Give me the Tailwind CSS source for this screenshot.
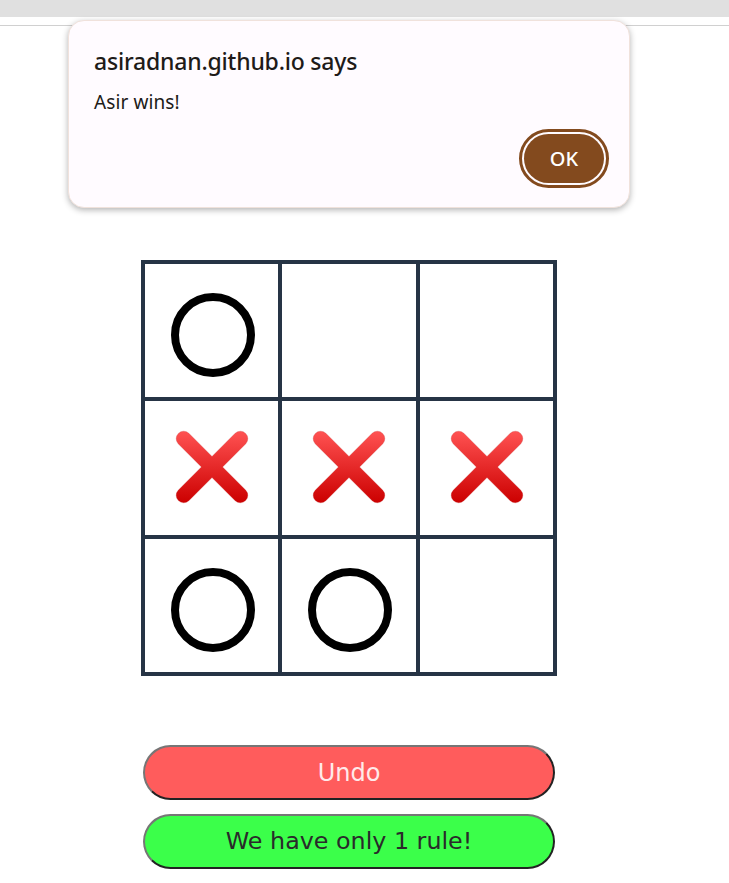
<!DOCTYPE html>
<html lang="en">
<head>
  <meta charset="UTF-8" />
  <title>Tic Tac Toe</title>
  <script src="https://cdn.jsdelivr.net/npm/@tailwindcss/browser@4"></script>
</head>
<body class="relative bg-white h-[883px] overflow-hidden font-['DejaVu_Sans',sans-serif]">
  <!-- Browser strip -->
  <div class="h-[17px] bg-[#e0e0e0]"></div>
  <div class="h-[9px] border-b border-[#d0d0d0]"></div>

  <!-- Alert -->
  <div class="absolute left-[68px] top-[20px] w-[562px] h-[188px] rounded-[16px] border border-[#f0e2dc] bg-[#fffbff] shadow-[0_2px_6px_rgba(0,0,0,0.3)] font-['Noto_Sans',sans-serif] text-[#201a18]">
    <h2 class="absolute left-[25px] top-[25px] text-[23px] leading-[30px] font-medium tracking-[-0.2px]">asiradnan.github.io says</h2>
    <p class="absolute left-[25px] top-[68px] text-[19px] leading-[26px] tracking-[0.1px]">Asir wins!</p>
    <div class="absolute left-[450px] top-[108px] w-[90px] h-[59px] rounded-full border-[3px] border-[#834a1e] p-[2px]">
      <button class="w-full h-full rounded-full bg-[#834a1e] text-white text-[20px] font-medium">OK</button>
    </div>
  </div>

  <main class="w-[698px] pt-[234px] flex flex-col items-center">
    <!-- Board -->
    <div class="grid grid-cols-3 grid-rows-3 w-[416px] h-[416px] p-[4px] gap-[4px] bg-[#263445]">
      <div class="min-h-0 bg-white flex items-center justify-center pl-[3px] pt-[9px]">
        <svg width="84" height="84" viewBox="0 0 84 84"><circle cx="42" cy="42" r="38" fill="none" stroke="#000" stroke-width="8"/></svg>
      </div>
      <div class="min-h-0 bg-white"></div>
      <div class="min-h-0 bg-white"></div>
      <div class="min-h-0 bg-white flex items-center justify-center pb-[1px] pl-[1px]">
        <svg width="74" height="74" viewBox="0 0 74 74">
          <defs>
            <linearGradient id="xfill" x1="0" y1="0" x2="0" y2="1">
              <stop offset="0" stop-color="#ff5252"/>
              <stop offset="1" stop-color="#cc0000"/>
            </linearGradient>
            <path id="cross" fill="url(#xfill)" stroke="#b22" stroke-opacity="0.3" stroke-width="0.8" d="M37 26.4 60.2 3.2A7.500 7.500 0 0 1 70.8 13.800L47.600 37 70.8 60.2A7.500 7.500 0 0 1 60.2 70.8L37 47.600 13.800 70.8A7.500 7.500 0 0 1 3.2 60.2L26.4 37 3.2 13.800A7.500 7.500 0 0 1 13.800 3.2Z"/>
          </defs>
          <use href="#cross"/>
        </svg>
      </div>
      <div class="min-h-0 bg-white flex items-center justify-center pb-[1px] pl-[1px]">
        <svg width="74" height="74" viewBox="0 0 74 74"><use href="#cross"/></svg>
      </div>
      <div class="min-h-0 bg-white flex items-center justify-center pb-[1px] pl-[1px]">
        <svg width="74" height="74" viewBox="0 0 74 74"><use href="#cross"/></svg>
      </div>
      <div class="min-h-0 bg-white flex items-center justify-center pl-[3px] pt-[9px]">
        <svg width="84" height="84" viewBox="0 0 84 84"><circle cx="42" cy="42" r="38" fill="none" stroke="#000" stroke-width="8"/></svg>
      </div>
      <div class="min-h-0 bg-white flex items-center justify-center pl-[3px] pt-[9px]">
        <svg width="84" height="84" viewBox="0 0 84 84"><circle cx="42" cy="42" r="38" fill="none" stroke="#000" stroke-width="8"/></svg>
      </div>
      <div class="min-h-0 bg-white"></div>
    </div>

    <!-- Buttons -->
    <button class="mt-[69px] w-[412px] h-[55px] rounded-[28px] border-2 border-t-[#767676] border-l-[#767676] border-r-[#222] border-b-[#222] bg-[#ff5c5c] text-[#ffeaea] text-[24px]">Undo</button>
    <button class="mt-[14px] w-[412px] h-[55px] rounded-[28px] border-2 border-t-[#767676] border-l-[#767676] border-r-[#222] border-b-[#222] bg-[#3bff4a] text-[#2a2a2a] text-[23.8px]">We have only 1 rule!</button>
  </main>
</body>
</html>
